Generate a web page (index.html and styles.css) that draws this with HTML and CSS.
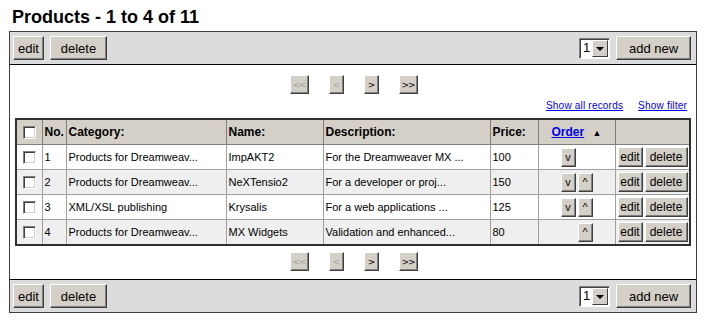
FILE: index.html
```html
<!DOCTYPE html>
<html lang="en">
<head>
    <meta charset="UTF-8">
    <title>Products</title>
    <link rel="stylesheet" href="styles.css">
</head>
<body>
    <h1 class="title">Products - 1 to 4 of 11</h1>
    <div class="box">
        <div class="toolbar">
            <div class="group">
                <span class="btn">edit</span>
                <span class="btn wide">delete</span>
            </div>
            <div class="group">
                <span class="fake-select"><span class="val">1</span><span class="arrow"></span></span>
                <span class="btn add">add new</span>
            </div>
        </div>

        <div class="content">
            <div class="pager">
                <span class="pbtn dis w2">&lt;&lt;</span>
                <span class="pbtn dis">&lt;</span>
                <span class="pbtn">&gt;</span>
                <span class="pbtn w2">&gt;&gt;</span>
            </div>
            <div class="links">
                <a href="#">Show all records</a>
                <a href="#">Show filter</a>
            </div>

            <table class="grid">
                <colgroup>
                    <col style="width:26px">
                    <col style="width:24px">
                    <col style="width:160px">
                    <col style="width:97px">
                    <col style="width:167px">
                    <col style="width:48px">
                    <col style="width:77px">
                    <col>
                </colgroup>
                <thead>
                    <tr>
                        <th class="c"><span class="chk"></span></th>
                        <th>No.</th>
                        <th>Category:</th>
                        <th>Name:</th>
                        <th>Description:</th>
                        <th>Price:</th>
                        <th class="c"><a href="#">Order</a> <span class="tri">&#9650;</span></th>
                        <th></th>
                    </tr>
                </thead>
                <tbody>
                    <tr>
                        <td class="c"><span class="chk"></span></td>
                        <td>1</td>
                        <td>Products for Dreamweav...</td>
                        <td>ImpAKT2</td>
                        <td>For the Dreamweaver MX ...</td>
                        <td>100</td>
                        <td class="c"><span class="sbtn">v</span><span class="sbtn hide">^</span></td>
                        <td class="acts"><span class="btn">edit</span><span class="btn wide">delete</span></td>
                    </tr>
                    <tr class="alt">
                        <td class="c"><span class="chk"></span></td>
                        <td>2</td>
                        <td>Products for Dreamweav...</td>
                        <td>NeXTensio2</td>
                        <td>For a developer or proj...</td>
                        <td>150</td>
                        <td class="c"><span class="sbtn">v</span><span class="sbtn">^</span></td>
                        <td class="acts"><span class="btn">edit</span><span class="btn wide">delete</span></td>
                    </tr>
                    <tr>
                        <td class="c"><span class="chk"></span></td>
                        <td>3</td>
                        <td>XML/XSL publishing</td>
                        <td>Krysalis</td>
                        <td>For a web applications ...</td>
                        <td>125</td>
                        <td class="c"><span class="sbtn">v</span><span class="sbtn">^</span></td>
                        <td class="acts"><span class="btn">edit</span><span class="btn wide">delete</span></td>
                    </tr>
                    <tr class="alt">
                        <td class="c"><span class="chk"></span></td>
                        <td>4</td>
                        <td>Products for Dreamweav...</td>
                        <td>MX Widgets</td>
                        <td>Validation and enhanced...</td>
                        <td>80</td>
                        <td class="c"><span class="sbtn hide">v</span><span class="sbtn">^</span></td>
                        <td class="acts"><span class="btn">edit</span><span class="btn wide">delete</span></td>
                    </tr>
                </tbody>
            </table>

            <div class="pager bottom">
                <span class="pbtn dis w2">&lt;&lt;</span>
                <span class="pbtn dis">&lt;</span>
                <span class="pbtn">&gt;</span>
                <span class="pbtn w2">&gt;&gt;</span>
            </div>
        </div>

        <div class="toolbar foot">
            <div class="group">
                <span class="btn">edit</span>
                <span class="btn wide">delete</span>
            </div>
            <div class="group">
                <span class="fake-select"><span class="val">1</span><span class="arrow"></span></span>
                <span class="btn add">add new</span>
            </div>
        </div>
    </div>
</body>
</html>
```

FILE: styles.css
```css
body {
    margin: 0;
    padding: 7px 7px 0 9px;
    font-family: "Liberation Sans", Arial, sans-serif;
    font-size: 11px;
    color: #000;
    background: #fff;
}
.title {
    margin: 0 0 4px 3px;
    font-size: 18px;
    font-weight: bold;
    line-height: 20px;
}
.box {
    width: 686px;
    border: 1px solid #404040;
}
.toolbar {
    display: flex;
    justify-content: space-between;
    align-items: center;
    height: 32px;
    padding: 0 5px 0 3px;
    background: #dcdcdc;
    border-bottom: 1px solid #000;
}
.toolbar.foot {
    border-bottom: none;
    border-top: 1px solid #000;
}
.group {
    display: flex;
    align-items: center;
    gap: 6px;
}
.btn {
    display: inline-flex;
    align-items: center;
    justify-content: center;
    box-sizing: border-box;
    height: 24px;
    padding: 0 4px;
    font-size: 13px;
    background: #d4d0c8;
    border: 1px solid;
    border-color: #fff #404040 #404040 #fff;
    box-shadow: inset -1px -1px #808080;
}
.btn.wide {
    width: 57px;
}
.btn.add {
    width: 75px;
}
.fake-select {
    display: inline-flex;
    box-sizing: border-box;
    width: 31px;
    height: 21px;
    background: #fff;
    border: 1px solid;
    border-color: #808080 #fff #fff #808080;
    box-shadow: inset 1px 1px #404040;
}
.fake-select .val {
    flex: 1;
    padding: 1px 0 0 3px;
    font-size: 13px;
}
.fake-select .arrow {
    position: relative;
    width: 16px;
    margin: 1px 1px 1px 0;
    background: #d4d0c8;
    border: 1px solid;
    border-color: #fff #404040 #404040 #fff;
    box-sizing: border-box;
}
.fake-select .arrow::after {
    content: "";
    position: absolute;
    left: 3px;
    top: 6px;
    border-left: 4px solid transparent;
    border-right: 4px solid transparent;
    border-top: 4px solid #000;
}
.content {
    padding: 10px 6px 8px 5px;
}
.pager {
    display: flex;
    justify-content: center;
    gap: 20px;
    padding-left: 2px;
}
.pager.bottom {
    margin-top: 6px;
}
.pbtn {
    display: inline-flex;
    align-items: center;
    justify-content: center;
    box-sizing: border-box;
    width: 15px;
    height: 19px;
    font-family: "DejaVu Sans", sans-serif;
    font-size: 9px;
    letter-spacing: -1px;
    background: #d4d0c8;
    border: 1px solid;
    border-color: #fff #404040 #404040 #fff;
    box-shadow: inset -1px -1px #808080;
}
.pbtn.w2 {
    width: 19px;
}
.pbtn.dis {
    color: #a0a0a0;
}
.links {
    display: flex;
    justify-content: flex-end;
    gap: 15px;
    margin: 6px 3px 7px 0;
    font-size: 10px;
    letter-spacing: 0.2px;
}
.links a,
.grid a {
    color: #0000ee;
}
.grid {
    width: 676px;
    border-collapse: collapse;
    table-layout: fixed;
    border: 2px solid #303030;
}
.grid th,
.grid td {
    height: 24px;
    padding: 0 2px;
    text-align: left;
    white-space: nowrap;
    overflow: hidden;
    border: 1px solid #a0a0a0;
}
.grid th {
    background: #d4d0c8;
    font-size: 12px;
    border-color: #808080;
}
.grid th a {
    font-weight: bold;
}
.grid .c {
    text-align: center;
}
.grid tr.alt td {
    background: #efefef;
}
.tri {
    font-size: 9px;
    margin-left: 5px;
}
.chk {
    display: inline-block;
    vertical-align: middle;
    box-sizing: border-box;
    width: 13px;
    height: 13px;
    background: #fff;
    border: 1px solid;
    border-color: #808080 #fff #fff #808080;
    box-shadow: inset 1px 1px #404040, inset -1px -1px #d4d0c8;
}
.sbtn {
    display: inline-flex;
    align-items: center;
    justify-content: center;
    box-sizing: border-box;
    width: 15px;
    height: 19px;
    margin: 0 1px;
    font-size: 11px;
    background: #d4d0c8;
    border: 1px solid;
    border-color: #fff #404040 #404040 #fff;
    box-shadow: inset -1px -1px #808080;
    vertical-align: middle;
}
.sbtn.hide {
    visibility: hidden;
}
.acts .btn {
    width: 25px;
    height: 20px;
    padding: 0;
    font-size: 12px;
    vertical-align: middle;
}
.acts .btn.wide {
    width: 43px;
    margin-left: 2px;
}
```
